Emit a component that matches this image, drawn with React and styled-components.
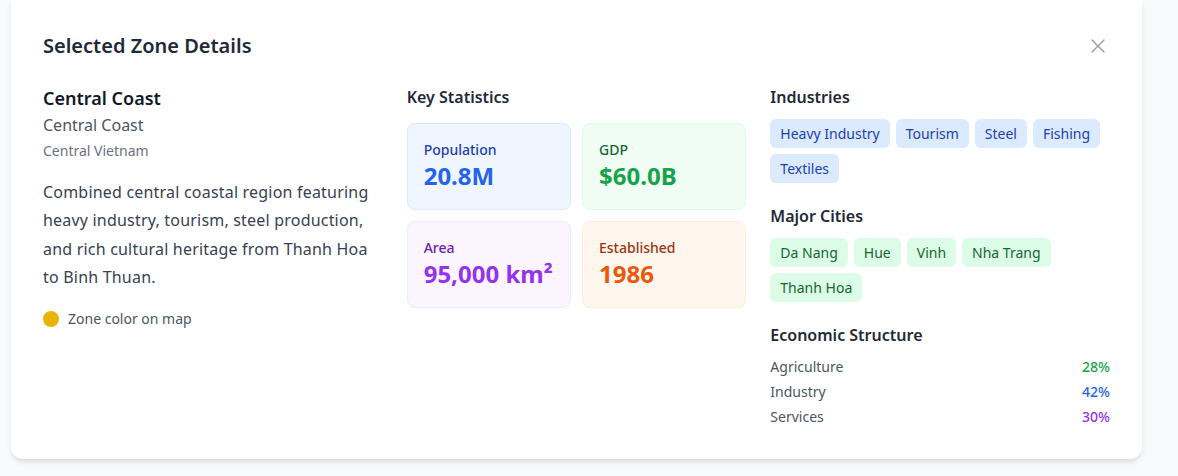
import React from "react"
import styled, { createGlobalStyle } from "styled-components"
import { X } from "lucide-react"

const GlobalStyle = createGlobalStyle`
  * { box-sizing: border-box; }
  body {
    margin: 0;
    background: #f9fafb;
    font-family: "Noto Sans", "Open Sans", Arial, sans-serif;
    color: #111827;
  }
`

const zone = {
  name: "Central Coast",
  alias: "Central Coast",
  region: "Central Vietnam",
  description:
    "Combined central coastal region featuring heavy industry, tourism, steel production, and rich cultural heritage from Thanh Hoa to Binh Thuan.",
  color: "#eab308",
  industries: ["Heavy Industry", "Tourism", "Steel", "Fishing", "Textiles"],
  cities: ["Da Nang", "Hue", "Vinh", "Nha Trang", "Thanh Hoa"],
  economy: [
    { label: "Agriculture", value: "28%", color: "#16a34a" },
    { label: "Industry", value: "42%", color: "#2563eb" },
    { label: "Services", value: "30%", color: "#9333ea" },
  ],
}

const stats = [
  { label: "Population", value: "20.8M", tone: "blue" },
  { label: "GDP", value: "$60.0B", tone: "green" },
  { label: "Area", value: "95,000 km²", tone: "purple" },
  { label: "Established", value: "1986", tone: "orange" },
]

const tones = {
  blue: { bg: "#eff6ff", border: "#dbeafe", label: "#1e40af", value: "#2563eb" },
  green: { bg: "#f0fdf4", border: "#dcfce7", label: "#166534", value: "#16a34a" },
  purple: { bg: "#faf5ff", border: "#f3e8ff", label: "#6b21a8", value: "#9333ea" },
  orange: { bg: "#fff7ed", border: "#ffedd5", label: "#9a3412", value: "#ea580c" },
}

const App = () => {
  return (
    <Page>
      <GlobalStyle />
      <Card>
        <Header>
          <Title>Selected Zone Details</Title>
          <CloseButton aria-label="Close">
            <X size={24} strokeWidth={1.5} />
          </CloseButton>
        </Header>
        <Columns>
          <Column>
            <ZoneName>{zone.name}</ZoneName>
            <ZoneAlias>{zone.alias}</ZoneAlias>
            <ZoneRegion>{zone.region}</ZoneRegion>
            <Description>{zone.description}</Description>
            <Legend>
              <Dot $color={zone.color} />
              Zone color on map
            </Legend>
          </Column>

          <Column>
            <SectionTitle $gap={14}>Key Statistics</SectionTitle>
            <StatGrid>
              {stats.map((s) => (
                <StatCard key={s.label} $tone={s.tone}>
                  <StatLabel $tone={s.tone}>{s.label}</StatLabel>
                  <StatValue $tone={s.tone}>{s.value}</StatValue>
                </StatCard>
              ))}
            </StatGrid>
          </Column>

          <Column>
            <Section>
              <SectionTitle>Industries</SectionTitle>
              <Tags>
                {zone.industries.map((t) => (
                  <Tag key={t} $kind="blue">{t}</Tag>
                ))}
              </Tags>
            </Section>
            <Section>
              <SectionTitle>Major Cities</SectionTitle>
              <Tags>
                {zone.cities.map((t) => (
                  <Tag key={t} $kind="green">{t}</Tag>
                ))}
              </Tags>
            </Section>
            <Section>
              <SectionTitle>Economic Structure</SectionTitle>
              <EconomyList>
                {zone.economy.map((e) => (
                  <EconomyRow key={e.label}>
                    <span>{e.label}</span>
                    <Percent $color={e.color}>{e.value}</Percent>
                  </EconomyRow>
                ))}
              </EconomyList>
            </Section>
          </Column>
        </Columns>
      </Card>
    </Page>
  )
}

const Page = styled.div`
  padding: 0 36px 18px 11px;
  min-height: 476px;
`

const Card = styled.div`
  background: #fff;
  border-radius: 0 0 12px 12px;
  box-shadow: 0 4px 6px -1px rgba(0, 0, 0, 0.1), 0 2px 4px -2px rgba(0, 0, 0, 0.1);
  padding: 32px;
`

const Header = styled.div`
  display: flex;
  align-items: center;
  justify-content: space-between;
  margin-bottom: 25px;
`

const Title = styled.h2`
  margin: 0;
  font-size: 20px;
  line-height: 28px;
  font-weight: 600;
  color: #1f2937;
`

const CloseButton = styled.button`
  display: flex;
  border: none;
  background: none;
  padding: 0;
  color: #9ca3af;
  cursor: pointer;
`

const Columns = styled.div`
  display: grid;
  grid-template-columns: repeat(3, 1fr);
  gap: 24px;
`

const Column = styled.div`
  display: flex;
  flex-direction: column;
  min-width: 0;
`

const ZoneName = styled.h3`
  margin: 0;
  font-size: 18px;
  line-height: 26px;
  font-weight: 600;
  color: #111827;
`

const ZoneAlias = styled.p`
  margin: 0;
  font-size: 16px;
  line-height: 28px;
  color: #4b5563;
`

const ZoneRegion = styled.p`
  margin: 0;
  font-size: 14px;
  line-height: 24px;
  color: #6b7280;
`

const Description = styled.p`
  margin: 15px 0 0;
  font-size: 16px;
  line-height: 28.3px;
  letter-spacing: 0.2px;
  color: #374151;
`

const Legend = styled.div`
  display: flex;
  align-items: center;
  gap: 9px;
  margin-top: 18px;
  font-size: 14px;
  color: #4b5563;
`

const Dot = styled.span`
  width: 16px;
  height: 16px;
  border-radius: 50%;
  background: ${(p) => p.$color};
`

const SectionTitle = styled.h4`
  margin: 0 0 ${(p) => p.$gap || 10}px;
  font-size: 16px;
  line-height: 24px;
  font-weight: 600;
  color: #1f2937;
`

const StatGrid = styled.div`
  display: grid;
  grid-template-columns: 1fr 1fr;
  gap: 11px;
`

const StatCard = styled.div`
  padding: 16px 16px 17px;
  border-radius: 8px;
  background: ${(p) => tones[p.$tone].bg};
  border: 1px solid ${(p) => tones[p.$tone].border};
`

const StatLabel = styled.div`
  font-size: 14px;
  line-height: 20px;
  font-weight: 500;
  color: ${(p) => tones[p.$tone].label};
`

const StatValue = styled.div`
  font-size: 24px;
  line-height: 32px;
  font-weight: 700;
  color: ${(p) => tones[p.$tone].value};
`

const Section = styled.div`
  & + & {
    margin-top: 21px;
  }
`

const Tags = styled.div`
  display: flex;
  flex-wrap: wrap;
  gap: 6px;
`

const Tag = styled.span`
  padding: 4px 10px;
  border-radius: 6px;
  font-size: 14px;
  line-height: 21px;
  background: ${(p) => (p.$kind === "green" ? "#dcfce7" : "#dbeafe")};
  color: ${(p) => (p.$kind === "green" ? "#166534" : "#1e40af")};
`

const EconomyList = styled.div`
  display: flex;
  flex-direction: column;
  gap: 5px;
`

const EconomyRow = styled.div`
  display: flex;
  justify-content: space-between;
  font-size: 14px;
  line-height: 20px;
  color: #4b5563;
`

const Percent = styled.span`
  font-weight: 500;
  color: ${(p) => p.$color};
`

export default App
